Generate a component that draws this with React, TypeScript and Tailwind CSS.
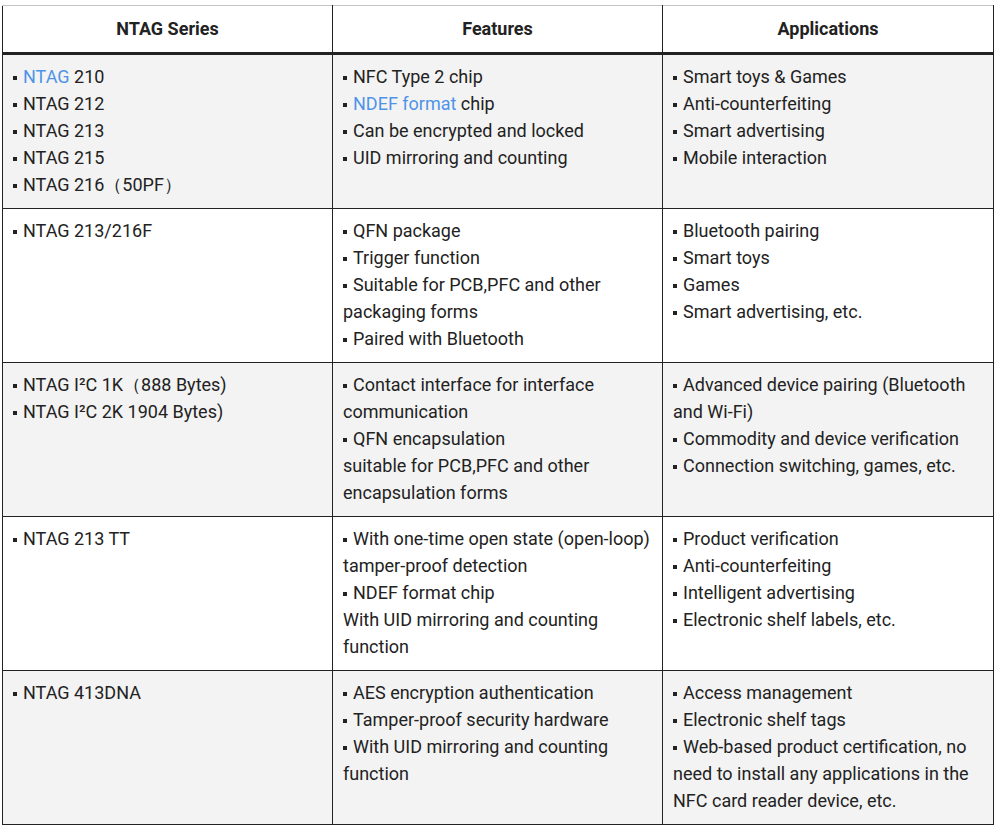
import React from 'react';

type Line = { text: React.ReactNode; bullet?: boolean };

const Blue = ({ children }: { children: React.ReactNode }) => (
  <span className="text-[#4f93e8]">{children}</span>
);

const rows: { shade: boolean; cols: Line[][] }[] = [
  {
    shade: true,
    cols: [
      [
        { bullet: true, text: <><Blue>NTAG</Blue> 210</> },
        { bullet: true, text: 'NTAG 212' },
        { bullet: true, text: 'NTAG 213' },
        { bullet: true, text: 'NTAG 215' },
        { bullet: true, text: 'NTAG 216（50PF）' },
      ],
      [
        { bullet: true, text: 'NFC Type 2 chip' },
        { bullet: true, text: <><Blue>NDEF format</Blue> chip</> },
        { bullet: true, text: 'Can be encrypted and locked' },
        { bullet: true, text: 'UID mirroring and counting' },
      ],
      [
        { bullet: true, text: 'Smart toys & Games' },
        { bullet: true, text: 'Anti-counterfeiting' },
        { bullet: true, text: 'Smart advertising' },
        { bullet: true, text: 'Mobile interaction' },
      ],
    ],
  },
  {
    shade: false,
    cols: [
      [{ bullet: true, text: 'NTAG 213/216F' }],
      [
        { bullet: true, text: 'QFN package' },
        { bullet: true, text: 'Trigger function' },
        { bullet: true, text: 'Suitable for PCB,PFC and other packaging forms' },
        { bullet: true, text: 'Paired with Bluetooth' },
      ],
      [
        { bullet: true, text: 'Bluetooth pairing' },
        { bullet: true, text: 'Smart toys' },
        { bullet: true, text: 'Games' },
        { bullet: true, text: 'Smart advertising, etc.' },
      ],
    ],
  },
  {
    shade: true,
    cols: [
      [
        { bullet: true, text: 'NTAG I²C 1K（888 Bytes)' },
        { bullet: true, text: 'NTAG I²C 2K 1904 Bytes)' },
      ],
      [
        { bullet: true, text: 'Contact interface for interface communication' },
        { bullet: true, text: 'QFN encapsulation' },
        { text: 'suitable for PCB,PFC and other encapsulation forms' },
      ],
      [
        { bullet: true, text: 'Advanced device pairing (Bluetooth and Wi-Fi)' },
        { bullet: true, text: 'Commodity and device verification' },
        { bullet: true, text: 'Connection switching, games, etc.' },
      ],
    ],
  },
  {
    shade: false,
    cols: [
      [{ bullet: true, text: 'NTAG 213 TT' }],
      [
        { bullet: true, text: 'With one-time open state (open-loop) tamper-proof detection' },
        { bullet: true, text: 'NDEF format chip' },
        { text: 'With UID mirroring and counting function' },
      ],
      [
        { bullet: true, text: 'Product verification' },
        { bullet: true, text: 'Anti-counterfeiting' },
        { bullet: true, text: 'Intelligent advertising' },
        { bullet: true, text: 'Electronic shelf labels, etc.' },
      ],
    ],
  },
  {
    shade: true,
    cols: [
      [{ bullet: true, text: 'NTAG 413DNA' }],
      [
        { bullet: true, text: 'AES encryption authentication' },
        { bullet: true, text: 'Tamper-proof security hardware' },
        { bullet: true, text: 'With UID mirroring and counting function' },
      ],
      [
        { bullet: true, text: 'Access management' },
        { bullet: true, text: 'Electronic shelf tags' },
        {
          bullet: true,
          text: 'Web-based product certification, no need to install any applications in the NFC card reader device, etc.',
        },
      ],
    ],
  },
];

const headers = ['NTAG Series', 'Features', 'Applications'];

export default function App() {
  return (
    <div className="bg-white min-h-screen pt-[5px] pl-[2px] font-['Roboto','Liberation_Sans',sans-serif] text-[18px] text-[#222]">
      <table className="table-fixed border-collapse w-[991px]">
        <colgroup>
          <col className="w-[330px]" />
          <col className="w-[330px]" />
          <col className="w-[331px]" />
        </colgroup>
        <thead>
          <tr>
            {headers.map((h) => (
              <th
                key={h}
                className="border-x border-[#222] border-t border-t-[#c4c4c4] border-b-[3px] border-b-[#222] pt-[9px] pb-[10px] px-[10px] leading-[27px] font-bold text-center"
              >
                {h}
              </th>
            ))}
          </tr>
        </thead>
        <tbody>
          {rows.map((r, i) => (
            <tr key={i} className={r.shade ? 'bg-[#f3f3f3]' : 'bg-white'}>
              {r.cols.map((lines, j) => (
                <td
                  key={j}
                  className="border border-[#222] align-top pt-[8px] pb-[10px] px-[10px] leading-[27px]"
                >
                  {lines.map((l, k) => (
                    <div key={k}>
                      {l.bullet && (
                        <span className="inline-block w-[4px] h-[4px] bg-[#222] align-middle mr-[6px]" />
                      )}
                      {l.text}
                    </div>
                  ))}
                </td>
              ))}
            </tr>
          ))}
        </tbody>
      </table>
    </div>
  );
}
